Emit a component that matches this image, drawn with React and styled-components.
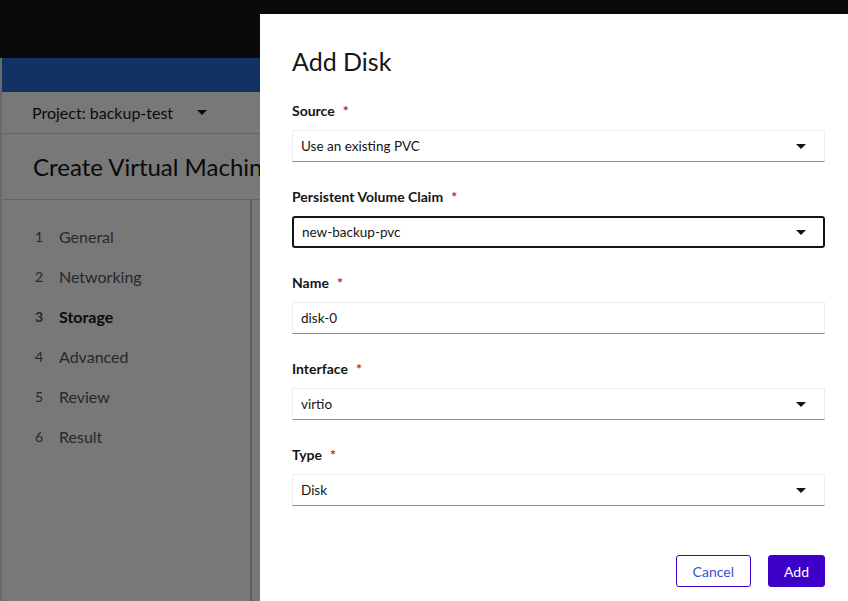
import React from 'react';
import styled, { createGlobalStyle } from 'styled-components';

const GlobalStyle = createGlobalStyle`
  html, body { margin: 0; padding: 0; height: 100%; overflow: hidden; }
  body { font-family: Lato, "Liberation Sans", sans-serif; background: #f0f0f0; }
`;

const Page = styled.div`
  height: 601px;
  display: flex;
  flex-direction: column;
  background: #f0f0f0;
`;

const Masthead = styled.div`
  height: 58px;
  background: #151515;
  flex-shrink: 0;
`;

const Main = styled.div`
  flex: 1;
  display: flex;
  flex-direction: column;
  border-left: 2px solid #d2d2d2;
`;

const BlueBar = styled.div`
  height: 34px;
  background: #2565c9;
`;

const ProjectBar = styled.div`
  height: 41px;
  display: flex;
  align-items: center;
  padding-left: 30px;
  gap: 24px;
  font-size: 16px;
  color: #151515;
  border-bottom: 1px solid #c8c8c8;
`;

const Caret = styled.span`
  width: 0;
  height: 0;
  border-left: ${p => p.size || 5}px solid transparent;
  border-right: ${p => p.size || 5}px solid transparent;
  border-top: ${p => p.size || 5}px solid #151515;
  display: inline-block;
`;

const PageTitle = styled.h1`
  margin: 0;
  height: 65px;
  display: flex;
  align-items: center;
  padding-left: 31px;
  font-size: 24px;
  font-weight: 400;
  color: #151515;
  white-space: nowrap;
  border-bottom: 1px solid #c8c8c8;
`;

const Wizard = styled.div`
  flex: 1;
  display: flex;
`;

const WizardNav = styled.ol`
  list-style: none;
  margin: 0;
  padding: 26px 0 0 33px;
  width: 215px;
  border-right: 2px solid #b8b8b8;
  display: flex;
  flex-direction: column;
  gap: 20px;
`;

const NavItem = styled.li`
  display: flex;
  align-items: center;
  height: 20px;
  font-size: 16px;
  color: ${p => (p.current ? '#151515' : '#4f5255')};
  font-weight: ${p => (p.current ? 700 : 400)};
`;

const NavNum = styled.span`
  width: 24px;
  font-size: 14px;
  font-weight: ${p => (p.current ? 700 : 400)};
  color: #4f5255;
`;

const Backdrop = styled.div`
  position: fixed;
  inset: 0;
  background: rgba(0, 0, 0, 0.5);
  display: flex;
  justify-content: flex-end;
  align-items: flex-start;
  padding-top: 14px;
`;

const Modal = styled.div`
  width: 588px;
  height: 600px;
  background: #fff;
  box-sizing: border-box;
  padding: 31px 23px 0 32px;
  display: flex;
  flex-direction: column;
`;

const ModalTitle = styled.h2`
  margin: 0 0 24px;
  font-size: 25px;
  font-weight: 400;
  line-height: 32px;
  color: #151515;
`;

const Form = styled.div`
  display: flex;
  flex-direction: column;
  gap: 25px;
`;

const Group = styled.div`
  display: flex;
  flex-direction: column;
  gap: 9px;
`;

const Label = styled.label`
  font-size: 14px;
  font-weight: 700;
  line-height: 20px;
  color: #151515;
`;

const Required = styled.span`
  color: #c9190b;
  margin-left: 8px;
`;

const Field = styled.div`
  height: 32px;
  box-sizing: border-box;
  display: flex;
  align-items: center;
  justify-content: space-between;
  padding: 0 ${p => (p.focused ? 17 : 18)}px 0 8px;
  font-size: 13.5px;
  color: #151515;
  border: ${p => (p.focused ? '2px solid #151515' : '1px solid #ededed')};
  border-bottom: ${p => (p.focused ? '2px solid #151515' : '1px solid #8a8d90')};
  border-radius: ${p => (p.focused ? '3px' : '0')};
`;

const Footer = styled.div`
  margin-top: 49px;
  display: flex;
  justify-content: flex-end;
  gap: 17px;
`;

const Button = styled.button`
  height: 32px;
  padding: 0 ${p => (p.primary ? 15 : 16)}px;
  font-family: inherit;
  font-size: 14px;
  border-radius: 3px;
  border: 1px solid #3c00c8;
  background: ${p => (p.primary ? '#3c00c8' : '#fff')};
  color: ${p => (p.primary ? '#fff' : '#3c4fd6')};
  cursor: pointer;
`;

const steps = ['General', 'Networking', 'Storage', 'Advanced', 'Review', 'Result'];

const fields = [
  { label: 'Source', value: 'Use an existing PVC', select: true },
  { label: 'Persistent Volume Claim', value: 'new-backup-pvc', select: true, focused: true },
  { label: 'Name', value: 'disk-0' },
  { label: 'Interface', value: 'virtio', select: true },
  { label: 'Type', value: 'Disk', select: true },
];

export default function App() {
  return (
    <>
      <GlobalStyle />
      <Page>
        <Masthead />
        <Main>
          <BlueBar />
          <ProjectBar>
            <span>Project: backup-test</span>
            <Caret />
          </ProjectBar>
          <PageTitle>Create Virtual Machine</PageTitle>
          <Wizard>
            <WizardNav>
              {steps.map((s, i) => (
                <NavItem key={s} current={i === 2}>
                  <NavNum current={i === 2}>{i + 1}</NavNum>
                  {s}
                </NavItem>
              ))}
            </WizardNav>
          </Wizard>
        </Main>
      </Page>
      <Backdrop>
        <Modal>
          <ModalTitle>Add Disk</ModalTitle>
          <Form>
            {fields.map(f => (
              <Group key={f.label}>
                <Label>
                  {f.label}
                  <Required>*</Required>
                </Label>
                <Field focused={f.focused}>
                  <span>{f.value}</span>
                  {f.select && <Caret size={5} />}
                </Field>
              </Group>
            ))}
          </Form>
          <Footer>
            <Button>Cancel</Button>
            <Button primary>Add</Button>
          </Footer>
        </Modal>
      </Backdrop>
    </>
  );
}
